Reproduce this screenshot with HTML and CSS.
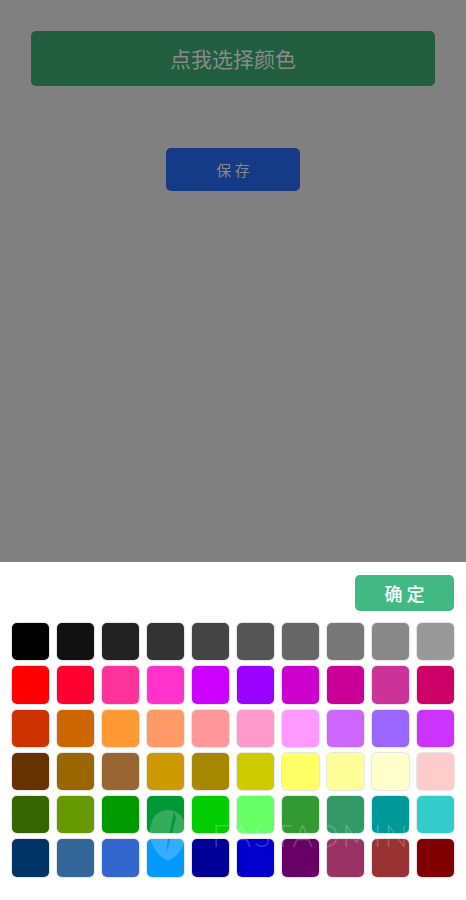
FILE: index.html
```html
<!DOCTYPE html>
<html lang="zh-CN">
<head>
<meta charset="UTF-8" />
<title>选择颜色</title>
<link rel="stylesheet" href="styles.css">
</head>
<body>
<div class="page">
	<div class="pickbtn">点我选择颜色</div>
	<div class="savebtn">保 存</div>
</div>

<div class="popup">
	<div class="popup-head">
		<div class="okbtn">确 定</div>
	</div>
	<div class="swatches">
		<span class="sw" style="background:#000000"></span>
		<span class="sw" style="background:#111111"></span>
		<span class="sw" style="background:#222222"></span>
		<span class="sw" style="background:#333333"></span>
		<span class="sw" style="background:#444444"></span>
		<span class="sw" style="background:#555555"></span>
		<span class="sw" style="background:#666666"></span>
		<span class="sw" style="background:#777777"></span>
		<span class="sw" style="background:#888888"></span>
		<span class="sw" style="background:#999999"></span>

		<span class="sw" style="background:#ff0000"></span>
		<span class="sw" style="background:#ff0033"></span>
		<span class="sw" style="background:#ff3399"></span>
		<span class="sw" style="background:#ff33cc"></span>
		<span class="sw" style="background:#cc00ff"></span>
		<span class="sw" style="background:#9900ff"></span>
		<span class="sw" style="background:#cc00cc"></span>
		<span class="sw" style="background:#cc0099"></span>
		<span class="sw" style="background:#cc3399"></span>
		<span class="sw" style="background:#cc0066"></span>

		<span class="sw" style="background:#cc3300"></span>
		<span class="sw" style="background:#cc6600"></span>
		<span class="sw" style="background:#ff9933"></span>
		<span class="sw" style="background:#ff9966"></span>
		<span class="sw" style="background:#ff9999"></span>
		<span class="sw" style="background:#ff99cc"></span>
		<span class="sw" style="background:#ff99ff"></span>
		<span class="sw" style="background:#cc66ff"></span>
		<span class="sw" style="background:#9966ff"></span>
		<span class="sw" style="background:#cc33ff"></span>

		<span class="sw" style="background:#663300"></span>
		<span class="sw" style="background:#996600"></span>
		<span class="sw" style="background:#996633"></span>
		<span class="sw" style="background:#cc9900"></span>
		<span class="sw" style="background:#a68800"></span>
		<span class="sw" style="background:#cccc00"></span>
		<span class="sw" style="background:#ffff66"></span>
		<span class="sw" style="background:#ffff99"></span>
		<span class="sw" style="background:#ffffcc"></span>
		<span class="sw" style="background:#ffcccc"></span>

		<span class="sw" style="background:#336600"></span>
		<span class="sw" style="background:#669900"></span>
		<span class="sw" style="background:#009900"></span>
		<span class="sw" style="background:#009933"></span>
		<span class="sw" style="background:#00cc00"></span>
		<span class="sw" style="background:#66ff66"></span>
		<span class="sw" style="background:#339933"></span>
		<span class="sw" style="background:#339966"></span>
		<span class="sw" style="background:#009999"></span>
		<span class="sw" style="background:#33cccc"></span>

		<span class="sw" style="background:#003366"></span>
		<span class="sw" style="background:#336699"></span>
		<span class="sw" style="background:#3366cc"></span>
		<span class="sw" style="background:#0099ff"></span>
		<span class="sw" style="background:#000099"></span>
		<span class="sw" style="background:#0000cc"></span>
		<span class="sw" style="background:#660066"></span>
		<span class="sw" style="background:#993366"></span>
		<span class="sw" style="background:#993333"></span>
		<span class="sw" style="background:#800000"></span>
	</div>

	<div class="watermark">
		<svg class="wm-logo" width="38" height="54" viewBox="0 0 38 54">
			<defs>
				<mask id="slit">
					<rect width="38" height="54" fill="#fff"/>
					<path d="M25 4 L27 10 L19 40 L17 44 L18 36 Z" fill="#000"/>
				</mask>
			</defs>
			<path d="M19 2 C31 2 37 12 37 24 C37 40 26 50 19 53 C12 50 1 40 1 24 C1 12 7 2 19 2 Z" fill="#fff" fill-opacity=".2" mask="url(#slit)"/>
		</svg>
		<span class="wm-text">FASTADMIN</span>
	</div>
</div>
</body>
</html>
```

FILE: styles.css
```css
* {
	margin: 0;
	padding: 0;
	box-sizing: border-box;
}

html, body {
	height: 100%;
}

body {
	display: flex;
	flex-direction: column;
	height: 900px;
	background: #808080;
	font-family: "Noto Sans CJK SC", "Noto Sans", sans-serif;
	overflow: hidden;
}

.page {
	flex: 1;
	display: flex;
	flex-direction: column;
	align-items: center;
	padding: 31px 31px 0;
	background: #808080;
}

.pickbtn {
	width: 100%;
	height: 55px;
	line-height: 55px;
	text-align: center;
	font-size: 21px;
	color: #8a8a8a;
	background: #215e40;
	border-radius: 5px;
}

.savebtn {
	width: 134px;
	height: 43px;
	margin-top: 62px;
	line-height: 43px;
	text-align: center;
	font-size: 15px;
	color: #888;
	background: #153b86;
	border-radius: 5px;
}

.popup {
	position: relative;
	height: 338px;
	background: #fff;
	padding: 13px 12px 0;
}

.popup-head {
	display: flex;
	justify-content: flex-end;
}

.okbtn {
	width: 99px;
	height: 36px;
	line-height: 36px;
	text-align: center;
	font-size: 18px;
	font-weight: 500;
	color: #fff;
	background: #42b983;
	border-radius: 5px;
}

.swatches {
	display: grid;
	grid-template-columns: repeat(10, 1fr);
	grid-auto-rows: 37.3px;
	column-gap: 8px;
	row-gap: 6px;
	margin-top: 12px;
}

.sw {
	display: block;
	border-radius: 5px;
	box-shadow: 0 0 1px 1px #e4e4e4;
}

.watermark {
	position: absolute;
	left: 149px;
	top: 246px;
	display: flex;
	align-items: center;
	gap: 25px;
	pointer-events: none;
}

.wm-text {
	font-family: Lato, "Open Sans", sans-serif;
	font-weight: 300;
	font-size: 31px;
	letter-spacing: 3px;
	color: rgba(255, 255, 255, .22);
}
```
